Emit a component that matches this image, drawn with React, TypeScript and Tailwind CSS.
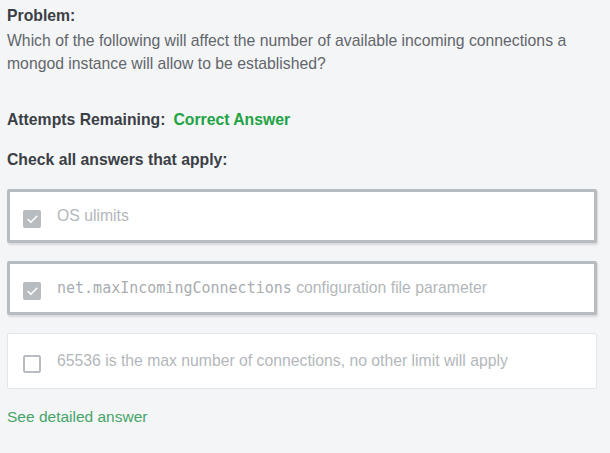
import { Check } from "lucide-react";

const OPTIONS = [
  { checked: true, code: "", text: "OS ulimits" },
  { checked: true, code: "net.maxIncomingConnections", text: " configuration file parameter" },
  { checked: false, code: "", text: "65536 is the max number of connections, no other limit will apply" },
];

export default function App() {
  return (
    <main
      className="min-h-[453px] w-full bg-[#f4f5f7] px-[7px] pt-[4px] text-[15.75px]"
      style={{ fontFamily: '"Liberation Sans", Arial, sans-serif' }}
    >
      <h3 className="font-bold leading-[24px] text-[#3b4046]">Problem:</h3>
      <p className="mt-[1px] w-[590px] leading-[23px] text-[#62666b]">
        Which of the following will affect the number of available incoming connections a mongod instance will allow to be established?
      </p>

      <div className="mt-[34px] flex gap-[8px] font-bold leading-[22px]">
        <span className="text-[#3b4046]">Attempts Remaining:</span>
        <span className="text-[#21a344]">Correct Answer</span>
      </div>

      <div className="mt-[18px] font-bold leading-[22px] text-[#3b4046]">Check all answers that apply:</div>

      <div className="mt-[18px] flex w-[590px] flex-col gap-[18px]">
        {OPTIONS.map((o, i) => (
          <div
            key={i}
            className={`flex items-center gap-[16px] rounded-[2px] bg-white ${
              o.checked
                ? "h-[54px] border-[3px] border-[#b7bcc0] pl-[13px] shadow-[1px_2px_2px_rgba(0,0,0,0.12)]"
                : "h-[56px] border border-[#e3e6e9] pl-[15px]"
            }`}
          >
            <span
              className={`flex h-[18px] w-[18px] translate-y-[3px] items-center justify-center rounded-[2px] ${
                o.checked ? "bg-[#b7bcc1]" : "border-2 border-[#b9bdc2] bg-white"
              }`}
            >
              {o.checked && <Check className="h-[13px] w-[13px] text-white" strokeWidth={3} />}
            </span>
            <span className="text-[#b3b7bb]">
              {o.code && (
                <code className="text-[15px] text-[#a9adb1]" style={{ fontFamily: '"DejaVu Sans Mono", monospace' }}>
                  {o.code}
                </code>
              )}
              {o.text}
            </span>
          </div>
        ))}
      </div>

      <a className="mt-[17px] block text-[15.5px] leading-[22px] text-[#45a567]">See detailed answer</a>
    </main>
  );
}
